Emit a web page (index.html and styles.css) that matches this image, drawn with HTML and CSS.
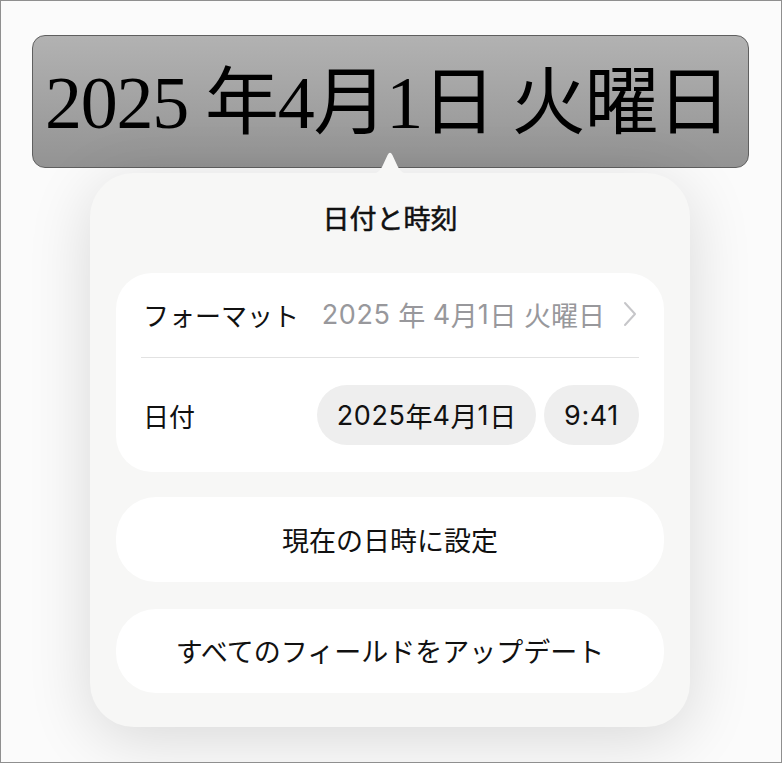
FILE: index.html
```html
<!DOCTYPE html>
<html lang="ja">
<head>
<meta charset="utf-8">
<link rel="stylesheet" href="styles.css">
</head>
<body>
<div class="frame">
  <div class="field">
    <span class="field-text">2025 年4月1日 火曜日</span>
  </div>
  <div class="popover">
    <svg class="arrow" width="46" height="24" viewBox="0 0 46 24"><path d="M0 24 C9 24 12.5 20.5 15.5 15 L20.6 4 Q23 -0.6 25.4 4 L30.5 15 C33.5 20.5 37 24 46 24 Z" fill="#f7f7f6"/></svg>
    <div class="title">日付と時刻</div>
    <div class="card">
      <div class="row row-format">
        <span class="label">フォーマット</span>
        <span class="value"><span class="num">2025</span> 年 <span class="num">4</span>月<span class="num">1</span>日 火曜日<svg class="chev" width="14" height="26" viewBox="0 0 14 26"><path d="M2 2 L12 13 L2 24" fill="none" stroke="#c6c6c9" stroke-width="2" stroke-linecap="round" stroke-linejoin="round"/></svg></span>
      </div>
      <div class="sep"></div>
      <div class="row row-date">
        <span class="label">日付</span>
        <div class="pills">
          <span class="pill pill-date"><span class="num">2025</span>年<span class="num">4</span>月<span class="num">1</span>日</span>
          <span class="pill pill-time"><span class="num">9:41</span></span>
        </div>
      </div>
    </div>
    <div class="btn">現在の日時に設定</div>
    <div class="btn">すべてのフィールドをアップデート</div>
  </div>
</div>
</body>
</html>
```

FILE: styles.css
```css
html, body {
  margin: 0;
  padding: 0;
  background: #fbfbfb;
}
.frame {
  width: 782px;
  height: 763px;
  box-sizing: border-box;
  border: 1px solid #8f8f8f;
  background: #fbfbfb;
  padding-top: 34px;
  overflow: hidden;
  font-family: "Inter", "Noto Sans CJK JP", sans-serif;
  color: #111;
}
.field {
  margin-left: 31px;
  width: 717px;
  height: 133px;
  box-sizing: border-box;
  border: 1px solid #5f5f5f;
  border-radius: 13px;
  background: linear-gradient(#b2b2b2, #939393);
  display: flex;
  align-items: center;
  justify-content: center;
}
.field-text {
  font-family: "Liberation Serif", "Noto Sans CJK JP", serif;
  font-size: 74px;
  letter-spacing: -1.3px;
  line-height: 1;
  color: #000;
  white-space: nowrap;
  margin-top: 3px;
  margin-right: 6px;
}
.popover {
  position: relative;
  margin-top: 5px;
  margin-left: 89px;
  width: 600px;
  height: 554px;
  box-sizing: border-box;
  background: #f7f7f6;
  border-radius: 44px;
  box-shadow: 0 12px 64px rgba(0,0,0,0.14);
  padding: 29px 26px 34px;
  display: flex;
  flex-direction: column;
}
.arrow {
  position: absolute;
  top: -22px;
  left: 277px;
}
.title {
  text-align: center;
  font-size: 27px;
  font-weight: 400;
  -webkit-text-stroke: 0.55px #111;
  line-height: 36px;
  height: 36px;
}
.card {
  margin-top: 35px;
  background: #fff;
  border-radius: 36px;
  padding: 0 25px;
}
.row {
  display: flex;
  align-items: center;
  justify-content: space-between;
  font-size: 27px;
}
.row-format {
  height: 84px;
  box-sizing: border-box;
  padding-bottom: 1px;
}
.row-date {
  padding: 27px 0;
}
.label {
  color: #111;
  font-size: 26px;
  padding-left: 2px;
}
.num {
  letter-spacing: 0.6px;
}
.value {
  color: #98989c;
  display: flex;
  align-items: center;
  white-space: pre;
}
.chev {
  display: block;
  margin-left: 18px;
  margin-right: 2px;
  margin-top: -2px;
}
.sep {
  height: 1px;
  background: #e2e2e2;
}
.pills {
  display: flex;
  gap: 8px;
}
.pill {
  height: 60px;
  border-radius: 30px;
  background: #eeeeee;
  display: flex;
  align-items: center;
  justify-content: center;
  color: #111;
  white-space: nowrap;
}
.pill-date {
  width: 219px;
}
.pill-time {
  width: 95px;
}
.btn {
  height: 85px;
  border-radius: 40px;
  background: #fff;
  display: flex;
  align-items: center;
  justify-content: center;
  font-size: 27px;
  color: #111;
  margin-top: 27px;
}
.card + .btn {
  margin-top: 25px;
}
```
